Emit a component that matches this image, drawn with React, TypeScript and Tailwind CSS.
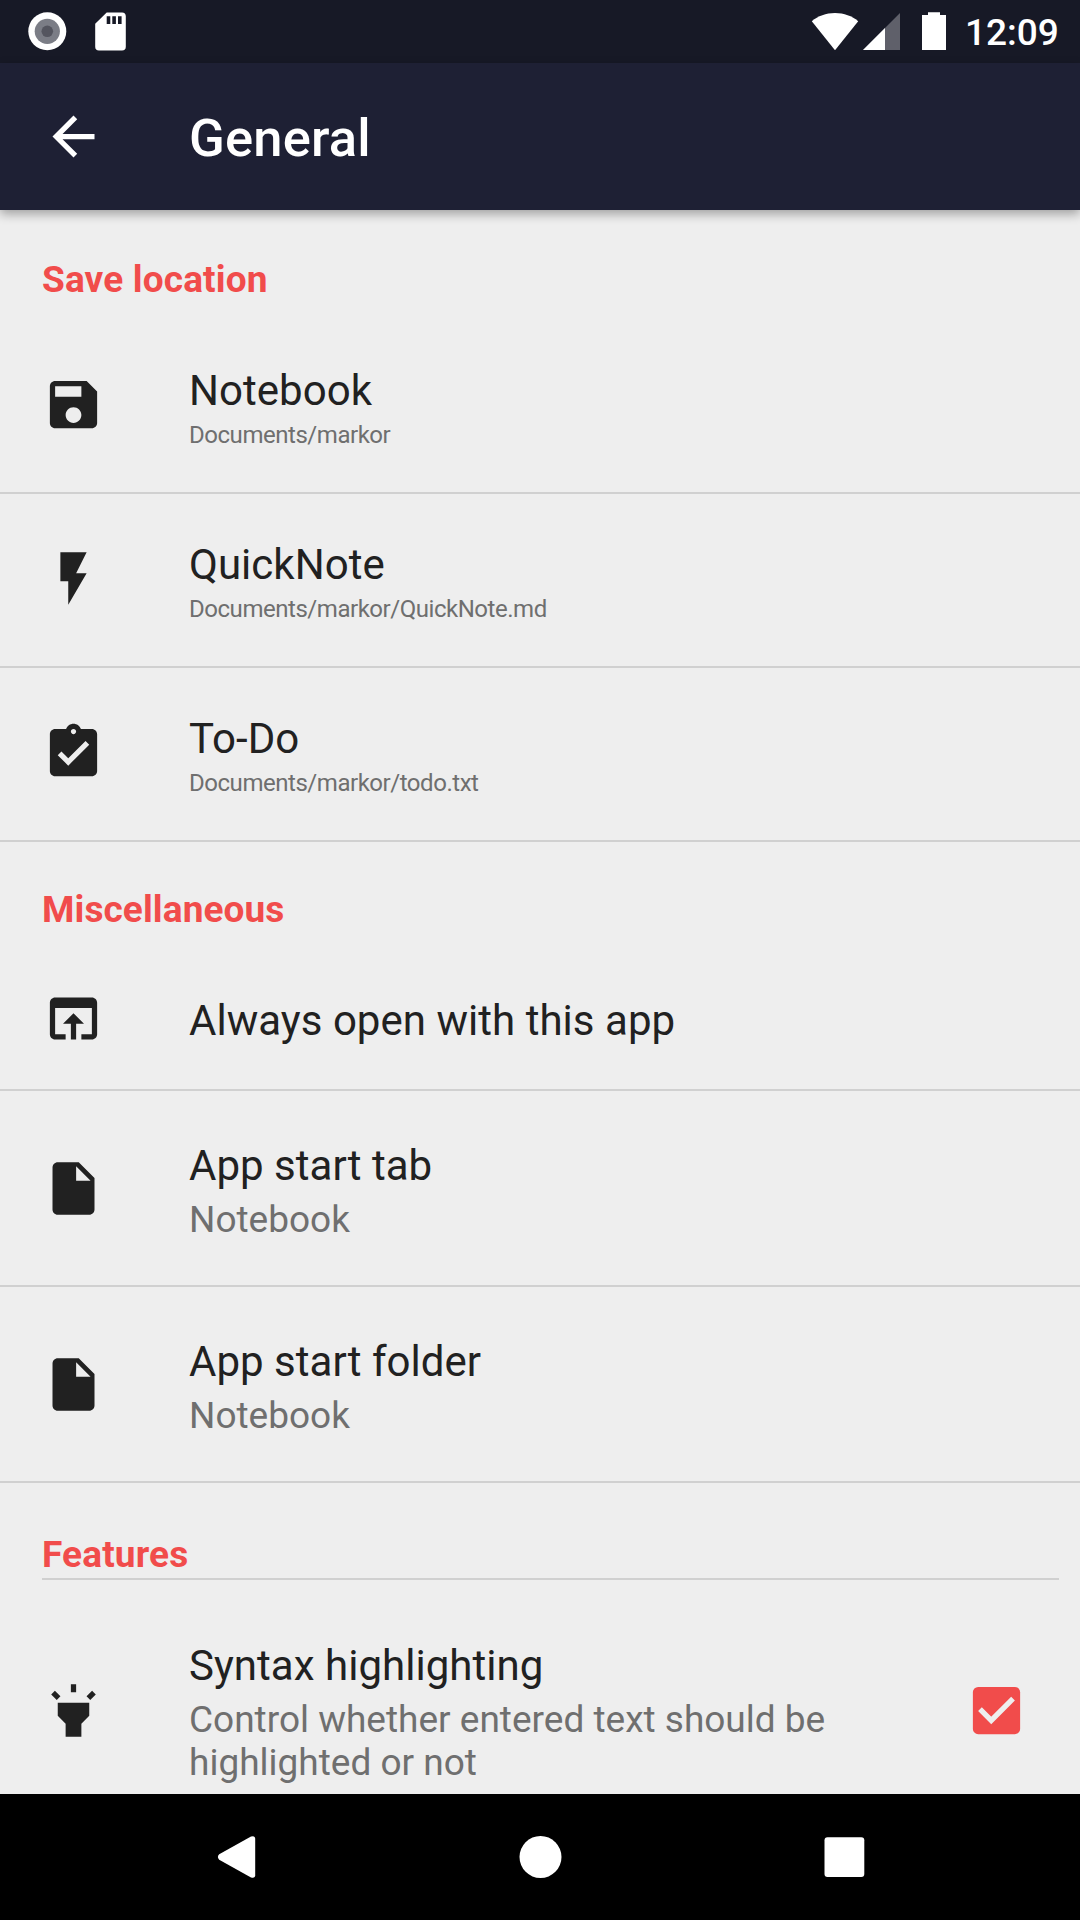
import type { ReactNode } from 'react';

const icons = {
  save: 'M17 3H5c-1.11 0-2 .9-2 2v14c0 1.1.89 2 2 2h14c1.1 0 2-.9 2-2V7l-4-4zm-5 16c-1.66 0-3-1.34-3-3s1.34-3 3-3 3 1.34 3 3-1.34 3-3 3zm3-10H5V5h10v4z',
  flash: 'M7 2v11h3v9l7-12h-4l4-8z',
  todo: 'M19 3h-4.18C14.4 1.84 13.3 1 12 1c-1.3 0-2.4.84-2.82 2H5c-1.1 0-2 .9-2 2v14c0 1.1.9 2 2 2h14c1.1 0 2-.9 2-2V5c0-1.1-.9-2-2-2zm-7 0c.55 0 1 .45 1 1s-.45 1-1 1-1-.45-1-1 .45-1 1-1zm-2 14l-4-4 1.41-1.41L10 14.17l6.59-6.59L18 9l-8 8z',
  open: 'M19 4H5c-1.11 0-2 .9-2 2v12c0 1.1.89 2 2 2h4v-2H5V8h14v10h-4v2h4c1.1 0 2-.9 2-2V6c0-1.1-.89-2-2-2zm-7 6l-4 4h3v6h2v-6h3l-4-4z',
  file: 'M6 2c-1.1 0-1.99.9-1.99 2L4 20c0 1.1.89 2 1.99 2H18c1.1 0 2-.9 2-2V8l-6-6H6zm7 7V3.5L18.5 9H13z',
  highlight:
    'M6 14l3 3v5h6v-5l3-3V9H6zM11 2h2v3h-2zM3.5 5.88l1.41-1.41 2.12 2.12L5.62 8zM16.96 6.59l2.12-2.12 1.41 1.41L18.38 8z',
  back: 'M20 11H7.83l5.59-5.59L12 4l-8 8 8 8 1.41-1.41L7.83 13H20v-2z',
};

function Icon({ path }: { path: string }) {
  return (
    <svg viewBox="0 0 24 24" className="size-[63px] shrink-0" fill="currentColor">
      <path d={path} />
    </svg>
  );
}

function StatusBar() {
  return (
    <div className="flex h-[63px] shrink-0 items-start bg-[#171926] text-white">
      <svg className="ml-[28px] mt-3 h-[39px] w-[39px]" viewBox="0 0 39 39">
        <circle cx="19.3" cy="19.3" r="19" fill="#fff" />
        <circle cx="19.3" cy="19.3" r="12.6" fill="#7b7d86" />
        <circle cx="19.3" cy="19.3" r="5.8" fill="#54555f" />
      </svg>
      <svg className="ml-[28px] mt-3 h-[39px] w-[31px]" viewBox="0 0 31 39">
        <path
          fill="#fff"
          fillRule="evenodd"
          d="M11.7.4H27a3.8 3.8 0 0 1 3.8 3.8v30.6a3.8 3.8 0 0 1-3.8 3.8H4a3.8 3.8 0 0 1-3.8-3.8V11.8zM11.7 4.2V12h3.6V4.2zM17.3 4.2V12h3.6V4.2zM23 4.2V12h3.6V4.2z"
        />
      </svg>
      <svg className="ml-auto mt-3 h-[39px] w-[48px]" viewBox="0 0 48 39">
        <path fill="#fff" d="M.8 9.2C7 4 15 1 24 1s17 3 23.2 8.2L24 38.3z" />
      </svg>
      <svg className="ml-[3px] mt-3 h-[39px] w-[38px]" viewBox="0 0 38 39">
        <path fill="#5f606a" d="M38 1v37H1z" />
        <path fill="#fff" d="M23 16v22H1z" />
      </svg>
      <svg className="ml-[22px] mt-3 h-[39px] w-[24px]" viewBox="0 0 24 39">
        <path fill="#fff" d="M6 .3h12V3h6v35H0V3h6z" />
      </svg>
      <div className="ml-[19px] mr-[21px] mt-[11px] w-[94px] whitespace-nowrap text-[37px] font-medium leading-[44px]">
        12:09
      </div>
    </div>
  );
}

function Row({
  icon,
  height,
  iconTop,
  textTop,
  children,
}: {
  icon: string;
  height: string;
  iconTop: string;
  textTop: string;
  children: ReactNode;
}) {
  return (
    <div className={`flex shrink-0 items-start border-b-2 border-[#d0d0d0] pl-[42px] ${height}`}>
      <div className={iconTop}>
        <Icon path={icon} />
      </div>
      <div className={`ml-[84px] ${textTop}`}>{children}</div>
    </div>
  );
}

const Title = ({ children }: { children: ReactNode }) => (
  <div className="whitespace-nowrap text-[42px] leading-[50px] tracking-[0.03px]">{children}</div>
);
const Path = ({ children }: { children: ReactNode }) => (
  <div className="mt-[5px] whitespace-nowrap text-[24px] leading-[28px] tracking-[-0.46px] text-[#6f6f6f]">
    {children}
  </div>
);
const Summary = ({ children }: { children: ReactNode }) => (
  <div className="mt-[7px] whitespace-nowrap text-[37px] leading-[43px] text-[#6f6f6f]">{children}</div>
);

const locations = [
  { icon: icons.save, title: 'Notebook', path: 'Documents/markor' },
  { icon: icons.flash, title: 'QuickNote', path: 'Documents/markor/QuickNote.md' },
  { icon: icons.todo, title: 'To-Do', path: 'Documents/markor/todo.txt' },
];

export default function App() {
  return (
    <div className="flex h-[1920px] w-[1080px] flex-col overflow-hidden bg-[#eeeeee] font-['Roboto',sans-serif] text-[#212121]">
      <StatusBar />
      <header className="z-10 flex h-[147px] shrink-0 items-start bg-[#1e2034] pl-[42px] pt-[42px] text-white shadow-[0_4px_10px_rgba(0,0,0,0.33)]">
        <Icon path={icons.back} />
        <h1 className="ml-[84px] mt-[2px] text-[52.5px] font-medium leading-[62px] tracking-[0.2px]">General</h1>
      </header>

      <main className="flex min-h-0 grow flex-col overflow-hidden">
        <h2 className="h-[110px] shrink-0 pl-[42px] pt-[48px] text-[37px] font-bold leading-[43px] tracking-[0.15px] text-[#f14c4b]">
          Save location
        </h2>
        {locations.map((l) => (
          <Row key={l.title} icon={l.icon} height="h-[174px]" iconTop="pt-[53px]" textTop="pt-[46px]">
            <Title>{l.title}</Title>
            <Path>{l.path}</Path>
          </Row>
        ))}

        <h2 className="h-[107px] shrink-0 pl-[42px] pt-[46px] text-[37px] font-bold leading-[43px] tracking-[0.1px] text-[#f14c4b]">
          Miscellaneous
        </h2>
        <Row icon={icons.open} height="h-[142px]" iconTop="pt-[38px]" textTop="pt-[47px]">
          <Title>Always open with this app</Title>
        </Row>
        <Row icon={icons.file} height="h-[196px]" iconTop="pt-[66px]" textTop="pt-[50px]">
          <Title>App start tab</Title>
          <Summary>Notebook</Summary>
        </Row>
        <Row icon={icons.file} height="h-[196px]" iconTop="pt-[66px]" textTop="pt-[50px]">
          <Title>App start folder</Title>
          <Summary>Notebook</Summary>
        </Row>

        <h2 className="ml-[42px] mr-[21px] h-[97px] shrink-0 border-b-2 border-[#d0d0d0] pt-[50px] text-[37px] font-bold leading-[43px] tracking-[0.15px] text-[#f14c4b]">
          Features
        </h2>
        <div className="flex shrink-0 items-start pl-[42px]">
          <div className="pt-[99px]">
            <Icon path={icons.highlight} />
          </div>
          <div className="ml-[84px] pt-[61px]">
            <Title>Syntax highlighting</Title>
            <Summary>
              Control whether entered text should be
              <br />
              highlighted or not
            </Summary>
          </div>
          <svg viewBox="0 0 24 24" className="ml-auto mr-[52.5px] mt-[98.500px] size-[63px] shrink-0">
            <rect x="3" y="3" width="18" height="18" rx="2" fill="#f14c4b" />
            <path d="M5.700 11.500l4.300 4.300 8.300-8.300" fill="none" stroke="#eeeeee" strokeWidth="2" />
          </svg>
        </div>
      </main>

      <nav className="flex h-[126px] shrink-0 items-center justify-center bg-black text-white">
        <svg viewBox="0 0 63 63" className="size-[63px]" fill="currentColor">
          <path d="M14.200 28.300L46 10.600Q50.200 9 50.200 12.800V49.200Q50.200 53 46 51.400L14.200 33.700Q11.600 31 14.200 28.300z" />
        </svg>
        <svg viewBox="0 0 63 63" className="mx-[241px] size-[63px]" fill="currentColor">
          <circle cx="31.500" cy="31" r="21" />
        </svg>
        <svg viewBox="0 0 63 63" className="size-[63px]" fill="currentColor">
          <rect x="11.500" y="11.200" width="39.800" height="39.800" rx="3" />
        </svg>
      </nav>
    </div>
  );
}
